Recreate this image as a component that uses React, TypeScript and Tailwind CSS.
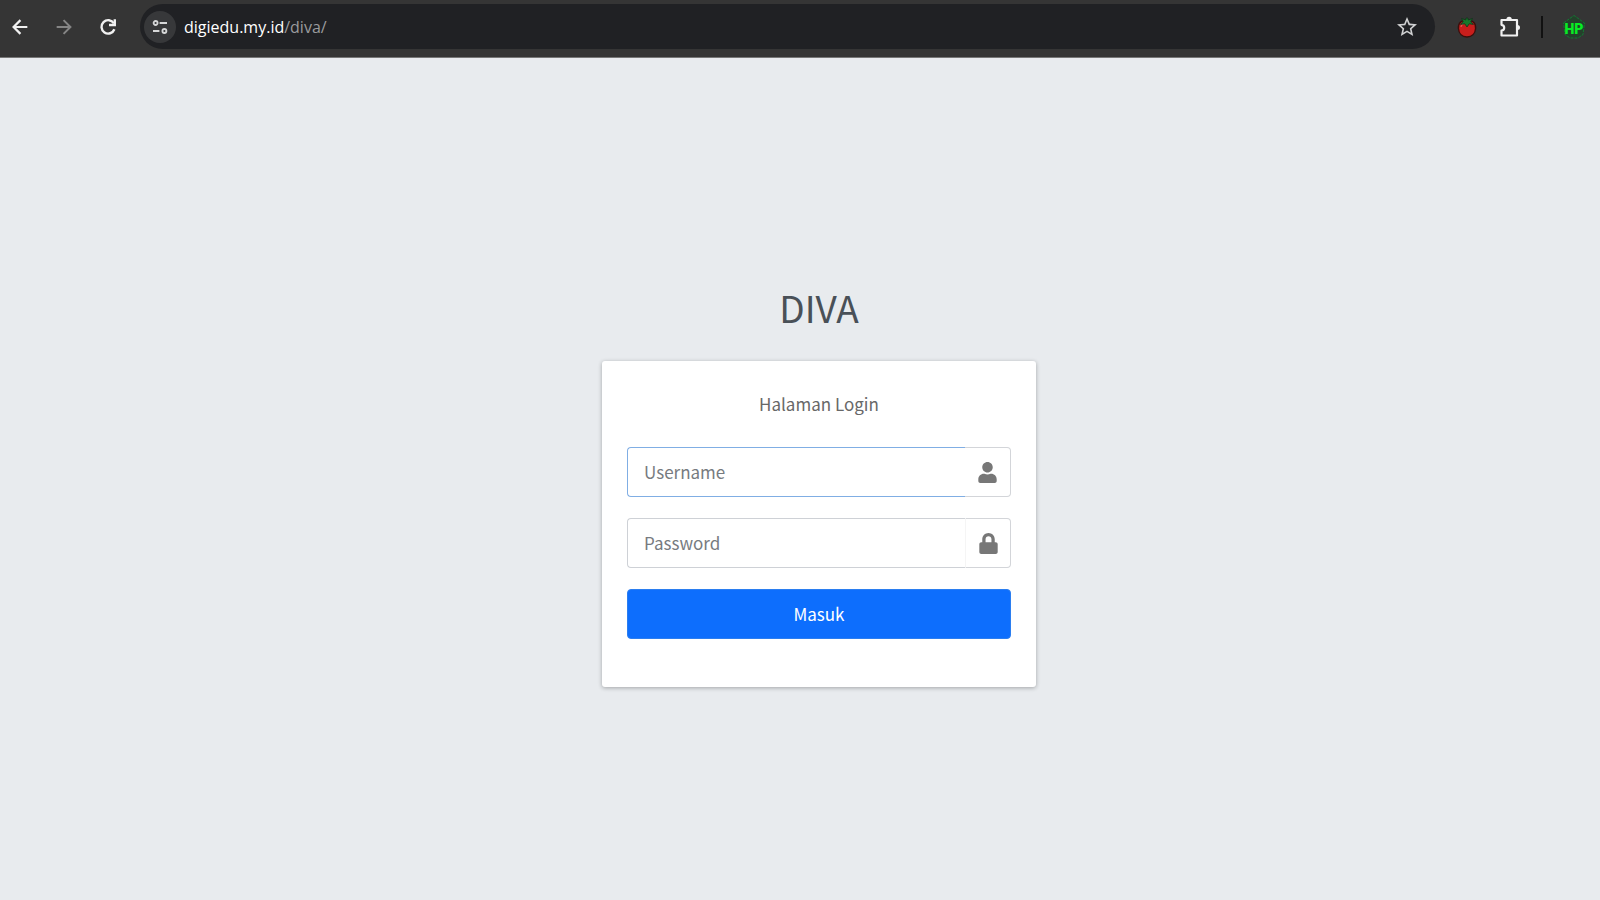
import React from "react";
import { FaLock, FaUser } from "react-icons/fa";
import { MdStarBorder } from "react-icons/md";

function BackIcon() {
  return (
    <svg width="22" height="22" viewBox="0 0 24 24" fill="none" stroke="currentColor" strokeWidth="2.400">
      <path d="M20 12H5.500M12.500 4.500 5 12l7.500 7.500" />
    </svg>
  );
}

function ForwardIcon() {
  return (
    <svg width="22" height="22" viewBox="0 0 24 24" fill="none" stroke="currentColor" strokeWidth="2.200">
      <path d="M4 12h14.500M11.500 4.500 19 12l-7.500 7.500" />
    </svg>
  );
}

function ReloadIcon() {
  return (
    <svg width="22" height="22" viewBox="0 0 24 24" fill="none" stroke="currentColor" strokeWidth="2.600">
      <path d="M18.400 8A7.300 7.300 0 1 0 19 14.500" />
      <path d="M19.400 3.500v6.300h-6.300" />
    </svg>
  );
}

function TuneIcon() {
  return (
    <svg width="18" height="18" viewBox="0 0 18 18" fill="none" stroke="#d6d7d8" strokeWidth="1.8">
      <circle cx="4.6" cy="5" r="2" />
      <path d="M8.6 5H16M2 13h6.4" />
      <circle cx="13.4" cy="13" r="2" />
    </svg>
  );
}

function TomatoIcon() {
  return (
    <svg width="22" height="24" viewBox="0 0 22 24">
      <path
        d="M11 6.500C16 4 20 8 19.600 13.500 19.200 19 15.500 22 11 22S2.800 19 2.400 13.500C2 8 6 4 11 6.500Z"
        fill="#c81e1c"
        stroke="#3a0f0c"
        strokeWidth="1.400"
      />
      <path d="M5 12c.2-1.500 1-2.600 2.200-3" stroke="#ee5550" strokeWidth="1.200" fill="none" />
      <path
        d="M10 3h2l.2 2 4.300-1.600-1.700 3.200 2.600 2.800-4.200-.6L11 12 8.800 8.800l-4.200.6 2.600-2.800L5.500 3.400l4.300 1.600Z"
        fill="#16782b"
        stroke="#12351a"
        strokeWidth=".8"
      />
    </svg>
  );
}

function PuzzleIcon() {
  return (
    <svg width="22" height="24" viewBox="0 0 22 24">
      <path
        d="M2.500 5H18v15.500H2.500v-4.800c3.600-.6 3.600-5.300 0-5.900Z"
        fill="none"
        stroke="#f1f1f1"
        strokeWidth="2.200"
        strokeLinejoin="round"
      />
      <path d="M7.400 4.500a2.700 2.700 0 0 1 5.400 0ZM18.500 10a2.500 2.500 0 0 1 0 5Z" fill="#f1f1f1" />
    </svg>
  );
}

function ProfileIcon() {
  return (
    <svg width="24" height="26" viewBox="0 0 24 26" className="shrink-0">
      <path
        d="M1.500 9 12 1.500 22.500 9 21 20.500 16 24H8l-5-3.500Z"
        fill="#24402b"
        stroke="#127a33"
        strokeWidth="1"
        strokeDasharray="3 1"
      />
      <text
        x="12"
        y="20"
        textAnchor="middle"
        fontFamily="Roboto, sans-serif"
        fontSize="14"
        fontWeight="900"
        fill="#08ed24"
      >
        HP
      </text>
    </svg>
  );
}

function NavBtn({ title, children }: { title: string; children: React.ReactNode }) {
  return (
    <button type="button" aria-label={title} className="flex w-6 h-6 items-center justify-center shrink-0">
      {children}
    </button>
  );
}

function BrowserBar() {
  return (
    <header className="flex h-[58px] items-center border-b border-[#777777] bg-[#353535] pb-1 pl-2 pr-3.5">
      <nav className="flex items-center gap-5 text-[#f1f1f1]">
        <NavBtn title="Back">
          <BackIcon />
        </NavBtn>
        <span className="flex text-[#858585]">
          <NavBtn title="Forward">
            <ForwardIcon />
          </NavBtn>
        </span>
        <NavBtn title="Reload">
          <ReloadIcon />
        </NavBtn>
      </nav>

      <div className="ml-5 flex h-[45px] flex-1 items-center rounded-full bg-[#202124] pl-1 pr-4">
        <button
          type="button"
          aria-label="Site information"
          className="flex w-8 h-8 items-center justify-center rounded-full bg-[#37383a]"
        >
          <TuneIcon />
        </button>
        <a
          href="#"
          className="ml-2 flex-1 font-['Open_Sans',sans-serif] text-base leading-6 text-[#9a9b9d]"
        >
          <span className="text-white">digiedu.my.id</span>/diva/
        </a>
        <button type="button" aria-label="Bookmark" className="text-[#d0d1d2]">
          <MdStarBorder size={24} />
        </button>
      </div>

      <div className="ml-5 flex items-center gap-[19px]">
        <NavBtn title="Tomato">
          <TomatoIcon />
        </NavBtn>
        <NavBtn title="Extensions">
          <PuzzleIcon />
        </NavBtn>
        <span className="h-[22px] w-[2px] bg-[#111111]" />
        <NavBtn title="Profile">
          <ProfileIcon />
        </NavBtn>
      </div>
    </header>
  );
}

function Field({
  type,
  label,
  icon,
  active,
}: {
  type: string;
  label: string;
  icon: React.ReactNode;
  active?: boolean;
}) {
  return (
    <div className="flex h-[50px]">
      <input
        type={type}
        aria-label={label}
        placeholder={label}
        className={
          active
            ? "min-w-0 flex-1 rounded-l border border-r-0 border-[#80aee4] px-4 text-[17px] outline-none placeholder:text-[#777b80]"
            : "min-w-0 flex-1 rounded-l border border-r-0 border-[#ced1d6] px-4 text-[17px] outline-none placeholder:text-[#777b80]"
        }
      />
      <span
        className={
          active
            ? "flex w-[46px] items-center justify-center rounded-r border border-l-0 border-[#d3d5d9] text-[#777777]"
            : "flex w-[46px] items-center justify-center rounded-r border border-[#d3d5d9] border-l-[#f5f5f5] text-[#777777]"
        }
      >
        {icon}
      </span>
    </div>
  );
}

export default function App() {
  return (
    <div className="flex min-h-screen flex-col bg-[#e8ebee] font-['Noto_Sans_CJK_SC',sans-serif]">
      <BrowserBar />
      <main className="flex flex-1 flex-col items-center justify-center pl-[38px] pt-3">
        <h1 className="mb-[30px] text-[37px] font-normal leading-[48px] text-[#495057]">DIVA</h1>
        <form
          className="flex w-[434px] flex-col gap-[21px] rounded-[3px] bg-white px-[25px] pb-12 pt-[27px] shadow-[0_1px_4px_rgba(0,0,0,0.3)]"
          onSubmit={(e) => e.preventDefault()}
        >
          <p className="mb-[6px] text-center text-[17px] leading-8 text-[#686868]">Halaman Login</p>
          <Field type="text" label="Username" icon={<FaUser size={21} />} active />
          <Field type="password" label="Password" icon={<FaLock size={21} />} />
          <button
            type="submit"
            className="h-[50px] rounded border border-[#2b7ef0] bg-[#0d6efd] text-[17px] text-white"
          >
            Masuk
          </button>
        </form>
      </main>
    </div>
  );
}
